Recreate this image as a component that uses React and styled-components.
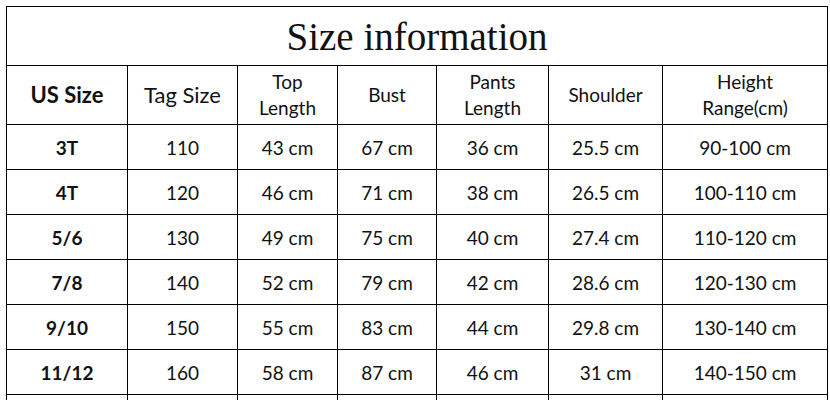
import React from "react";
import styled, { createGlobalStyle } from "styled-components";

const GlobalStyle = createGlobalStyle`
  html, body {
    margin: 0;
    padding: 0;
    background: #ffffff;
    overflow: hidden;
  }
`;

const Page = styled.div`
  padding: 6px 2px 0 6px;
  background: #ffffff;
`;

const Table = styled.div`
  display: grid;
  grid-template-columns: 120px 109px 99px 98px 111px 113px 164px;
  grid-template-rows: 58px 58px;
  grid-auto-rows: 44px;
  gap: 1px;
  background: #000;
  border: 1px solid #000;
  width: max-content;
`;

const Title = styled.div`
  grid-column: 1 / -1;
  background: #fff;
  display: flex;
  align-items: center;
  justify-content: center;
  font-family: "Liberation Serif", "Times New Roman", serif;
  font-size: 39px;
  color: #111;
`;

const HeadCell = styled.div`
  background: #fff;
  display: flex;
  align-items: center;
  justify-content: center;
  text-align: center;
  font-family: Lato, "Open Sans", sans-serif;
  font-size: ${(p) => (p.$large ? "22px" : "19px")};
  font-weight: ${(p) => (p.$bold ? 700 : 400)};
  line-height: 26px;
  color: #111;
`;

const Cell = styled.div`
  background: #fff;
  display: flex;
  align-items: center;
  justify-content: center;
  font-family: Lato, "Open Sans", sans-serif;
  font-size: 19px;
  font-weight: ${(p) => (p.$bold ? 700 : 400)};
  color: #111;
`;

const headers = [
  { label: "US Size", bold: true, large: true },
  { label: "Tag Size", large: true },
  { label: ["Top", "Length"] },
  { label: "Bust" },
  { label: ["Pants", "Length"] },
  { label: "Shoulder" },
  { label: ["Height", "Range(cm)"] },
];

const rows = [
  ["3T", "110", "43 cm", "67 cm", "36 cm", "25.5 cm", "90-100 cm"],
  ["4T", "120", "46 cm", "71 cm", "38 cm", "26.5 cm", "100-110 cm"],
  ["5/6", "130", "49 cm", "75 cm", "40 cm", "27.4 cm", "110-120 cm"],
  ["7/8", "140", "52 cm", "79 cm", "42 cm", "28.6 cm", "120-130 cm"],
  ["9/10", "150", "55 cm", "83 cm", "44 cm", "29.8 cm", "130-140 cm"],
  ["11/12", "160", "58 cm", "87 cm", "46 cm", "31 cm", "140-150 cm"],
  ["", "", "", "", "", "", ""],
];

export default function App() {
  return (
    <>
      <GlobalStyle />
      <Page>
        <Table>
          <Title>Size information</Title>
          {headers.map((h, i) => (
            <HeadCell key={i} $bold={h.bold} $large={h.large}>
              {Array.isArray(h.label) ? (
                <span>
                  {h.label[0]}
                  <br />
                  {h.label[1]}
                </span>
              ) : (
                h.label
              )}
            </HeadCell>
          ))}
          {rows.map((r, ri) =>
            r.map((v, ci) => (
              <Cell key={`${ri}-${ci}`} $bold={ci === 0}>
                {v}
              </Cell>
            ))
          )}
        </Table>
      </Page>
    </>
  );
}
